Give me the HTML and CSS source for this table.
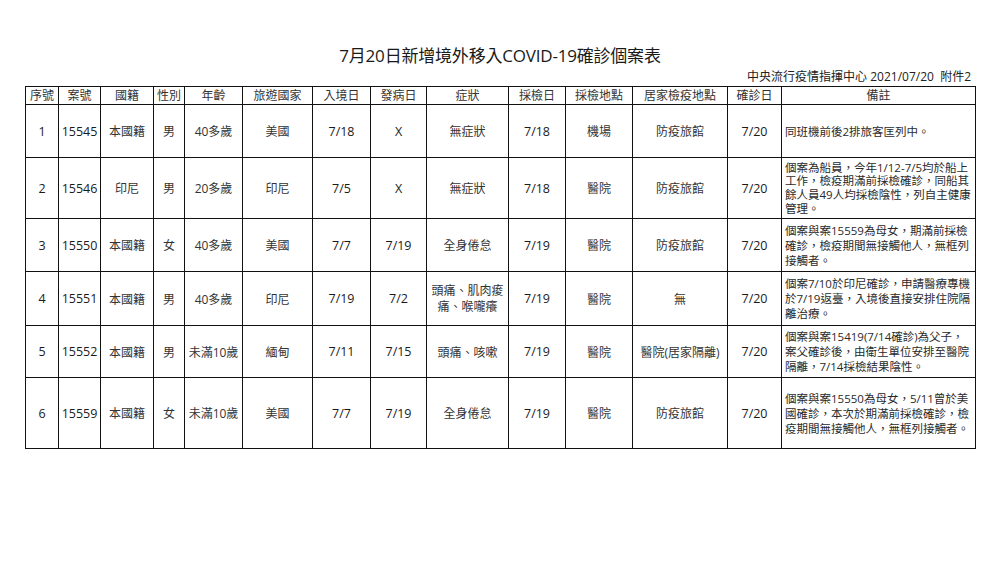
FILE: index.html
```html
<!DOCTYPE html>
<html lang="zh-TW">
<head>
<meta charset="utf-8">
<title>7月20日新增境外移入COVID-19確診個案表</title>
<link rel="stylesheet" href="styles.css">
</head>
<body>
<div class="page">
  <h1 class="title">7月20日新增境外移入COVID-19確診個案表</h1>
  <div class="sub">中央流行疫情指揮中心 2021/07/20&nbsp; 附件2</div>
  <table class="cases">
    <colgroup>
      <col class="c1"><col class="c2"><col class="c3"><col class="c4"><col class="c5"><col class="c6"><col class="c7">
      <col class="c8"><col class="c9"><col class="c10"><col class="c11"><col class="c12"><col class="c13"><col class="c14">
    </colgroup>
    <thead>
      <tr class="head">
        <th>序號</th><th>案號</th><th>國籍</th><th>性別</th><th>年齡</th><th>旅遊國家</th><th>入境日</th>
        <th>發病日</th><th>症狀</th><th>採檢日</th><th>採檢地點</th><th>居家檢疫地點</th><th>確診日</th><th>備註</th>
      </tr>
    </thead>
    <tbody>
      <tr class="r1">
        <td class="num">1</td><td class="num">15545</td><td>本國籍</td><td>男</td><td>40多歲</td><td>美國</td><td class="num">7/18</td>
        <td class="num">X</td><td>無症狀</td><td class="num">7/18</td><td>機場</td><td>防疫旅館</td><td class="num">7/20</td>
        <td class="note">同班機前後2排旅客匡列中。</td>
      </tr>
      <tr class="r2">
        <td class="num">2</td><td class="num">15546</td><td>印尼</td><td>男</td><td>20多歲</td><td>印尼</td><td class="num">7/5</td>
        <td class="num">X</td><td>無症狀</td><td class="num">7/18</td><td>醫院</td><td>防疫旅館</td><td class="num">7/20</td>
        <td class="note tight">個案為船員，今年1/12-7/5均於船上<br>工作，檢疫期滿前採檢確診，同船其<br>餘人員49人均採檢陰性，列自主健康<br>管理。</td>
      </tr>
      <tr class="r3">
        <td class="num">3</td><td class="num">15550</td><td>本國籍</td><td>女</td><td>40多歲</td><td>美國</td><td class="num">7/7</td>
        <td class="num">7/19</td><td>全身倦怠</td><td class="num">7/19</td><td>醫院</td><td>防疫旅館</td><td class="num">7/20</td>
        <td class="note">個案與案15559為母女，期滿前採檢<br>確診，檢疫期間無接觸他人，無框列<br>接觸者。</td>
      </tr>
      <tr class="r4">
        <td class="num">4</td><td class="num">15551</td><td>本國籍</td><td>男</td><td>40多歲</td><td>印尼</td><td class="num">7/19</td>
        <td class="num">7/2</td><td class="sym">頭痛、肌肉痠<br>痛、喉嚨癢</td><td class="num">7/19</td><td>醫院</td><td>無</td><td class="num">7/20</td>
        <td class="note">個案7/10於印尼確診，申請醫療專機<br>於7/19返臺，入境後直接安排住院隔<br>離治療。</td>
      </tr>
      <tr class="r5">
        <td class="num">5</td><td class="num">15552</td><td>本國籍</td><td>男</td><td>未滿10歲</td><td>緬甸</td><td class="num">7/11</td>
        <td class="num">7/15</td><td>頭痛、咳嗽</td><td class="num">7/19</td><td>醫院</td><td>醫院(居家隔離)</td><td class="num">7/20</td>
        <td class="note">個案與案15419(7/14確診)為父子，<br>案父確診後，由衛生單位安排至醫院<br>隔離，7/14採檢結果陰性。</td>
      </tr>
      <tr class="r6">
        <td class="num">6</td><td class="num">15559</td><td>本國籍</td><td>女</td><td>未滿10歲</td><td>美國</td><td class="num">7/7</td>
        <td class="num">7/19</td><td>全身倦怠</td><td class="num">7/19</td><td>醫院</td><td>防疫旅館</td><td class="num">7/20</td>
        <td class="note">個案與案15550為母女，5/11曾於美<br>國確診，本次於期滿前採檢確診，檢<br>疫期間無接觸他人，無框列接觸者。</td>
      </tr>
    </tbody>
  </table>
</div>
</body>
</html>
```

FILE: styles.css
```css
html, body {
  margin: 0;
  padding: 0;
  background: #fff;
}

body {
  font-family: "Open Sans", "Noto Sans CJK TC", sans-serif;
  color: #222;
  font-feature-settings: "locl" 1;
}

.page {
  width: 950px;
  padding: 45px 25px 0 25px;
}

.title {
  margin: 0;
  font-size: 17px;
  line-height: 22px;
  font-weight: normal;
  text-align: center;
  color: #1a1a1a;
  letter-spacing: -0.2px;
}

.sub {
  margin-top: 3px;
  font-size: 12px;
  line-height: 14px;
  text-align: right;
  padding-right: 4px;
  color: #222;
}

.cases {
  margin-top: 2px;
  width: 950px;
  table-layout: fixed;
  border-collapse: collapse;
  font-size: 12px;
}

.c1 { width: 33px; }
.c2 { width: 42px; }
.c3 { width: 53px; }
.c4 { width: 31px; }
.c5 { width: 58px; }
.c6 { width: 70px; }
.c7 { width: 58px; }
.c8 { width: 56px; }
.c9 { width: 82px; }
.c10 { width: 57px; }
.c11 { width: 67px; }
.c12 { width: 95px; }
.c13 { width: 54px; }
.c14 { width: 194px; }

.cases th,
.cases td {
  border: 1px solid #111;
  padding: 0;
  text-align: center;
  vertical-align: middle;
  white-space: nowrap;
  overflow: hidden;
  color: #333;
}

.cases th {
  font-weight: normal;
  height: 17px;
  line-height: 16px;
  font-size: 12px;
}

.cases td.num {
  font-size: 12.5px;
  color: #1a1a1a;
}

.cases td.sym {
  line-height: 16px;
}

.cases td.note {
  text-align: left;
  padding-left: 3px;
  font-size: 11.5px;
  line-height: 15px;
  color: #2a2a2a;
}

.cases td.note.tight {
  line-height: 13.6px;
}

.r1 td { height: 52px; }
.r2 td { height: 60px; }
.r3 td { height: 52px; }
.r4 td { height: 53px; }
.r5 td { height: 51px; }
.r6 td { height: 70px; }
```
